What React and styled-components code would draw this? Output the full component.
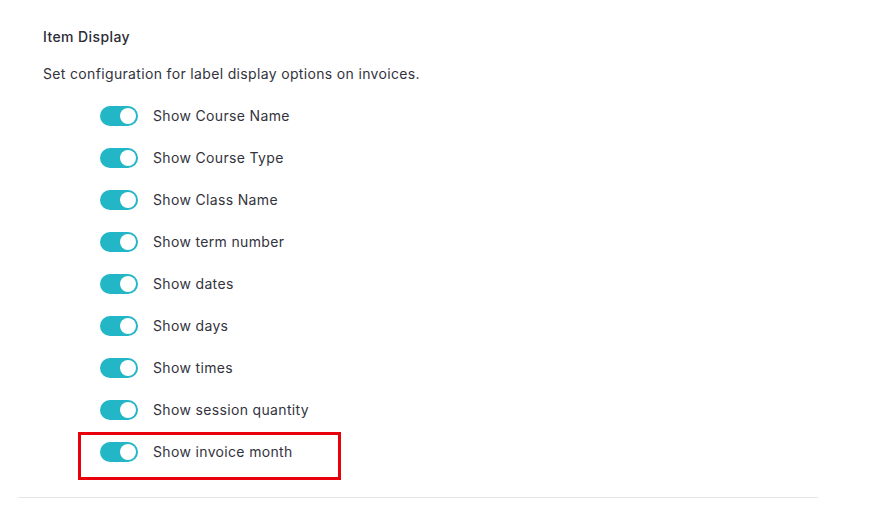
import styled, { createGlobalStyle } from 'styled-components';

const GlobalStyle = createGlobalStyle`
    body {
        margin: 0;
        background: #ffffff;
        font-family: 'Inter', 'Noto Sans', sans-serif;
        color: #2f2f3a;
    }
`;

const options = [
    'Show Course Name',
    'Show Course Type',
    'Show Class Name',
    'Show term number',
    'Show dates',
    'Show days',
    'Show times',
    'Show session quantity',
    'Show invoice month',
];

function Toggle() {
    return (
        <Track>
            <Knob />
        </Track>
    );
}

export default function App() {
    return (
        <>
            <GlobalStyle />
            <Section>
                <Title>Item Display</Title>
                <Description>Set configuration for label display options on invoices.</Description>
                <List>
                    {options.map((label, i) => (
                        <Row key={label} $marked={i === options.length - 1}>
                            <Toggle />
                            <Label>{label}</Label>
                        </Row>
                    ))}
                </List>
            </Section>
        </>
    );
}

const Section = styled.div`
    width: 800px;
    margin-left: 18px;
    padding: 27px 0 24px 25px;
    box-sizing: border-box;
    border-bottom: 1px solid #e6e6e6;
`;

const Title = styled.div`
    font-size: 14px;
    font-weight: 500;
    line-height: 20px;
    letter-spacing: 0.4px;
    color: #2c2c36;
`;

const Description = styled.div`
    margin-top: 17px;
    font-size: 14px;
    line-height: 20px;
    letter-spacing: 0.34px;
    color: #33333d;
`;

const List = styled.div`
    margin-top: 11px;
    padding-left: 57px;
    display: flex;
    flex-direction: column;
`;

const Row = styled.div`
    position: relative;
    height: 42px;
    display: flex;
    align-items: center;
    gap: 15px;

    ${({ $marked }) =>
        $marked &&
        `
        &::after {
            content: '';
            position: absolute;
            left: -22px;
            top: 1px;
            width: 263px;
            height: 48px;
            border: 3px solid #e8000b;
            box-sizing: border-box;
        }
    `}
`;

const Track = styled.div`
    width: 38px;
    height: 20px;
    border-radius: 10px;
    background: #22b6c7;
    display: flex;
    align-items: center;
    justify-content: flex-end;
    padding: 0 2px;
    box-sizing: border-box;
    flex-shrink: 0;
`;

const Knob = styled.div`
    width: 16px;
    height: 16px;
    border-radius: 50%;
    background: #ffffff;
`;

const Label = styled.span`
    font-size: 14px;
    line-height: 20px;
    letter-spacing: 0.34px;
    color: #33333d;
`;
